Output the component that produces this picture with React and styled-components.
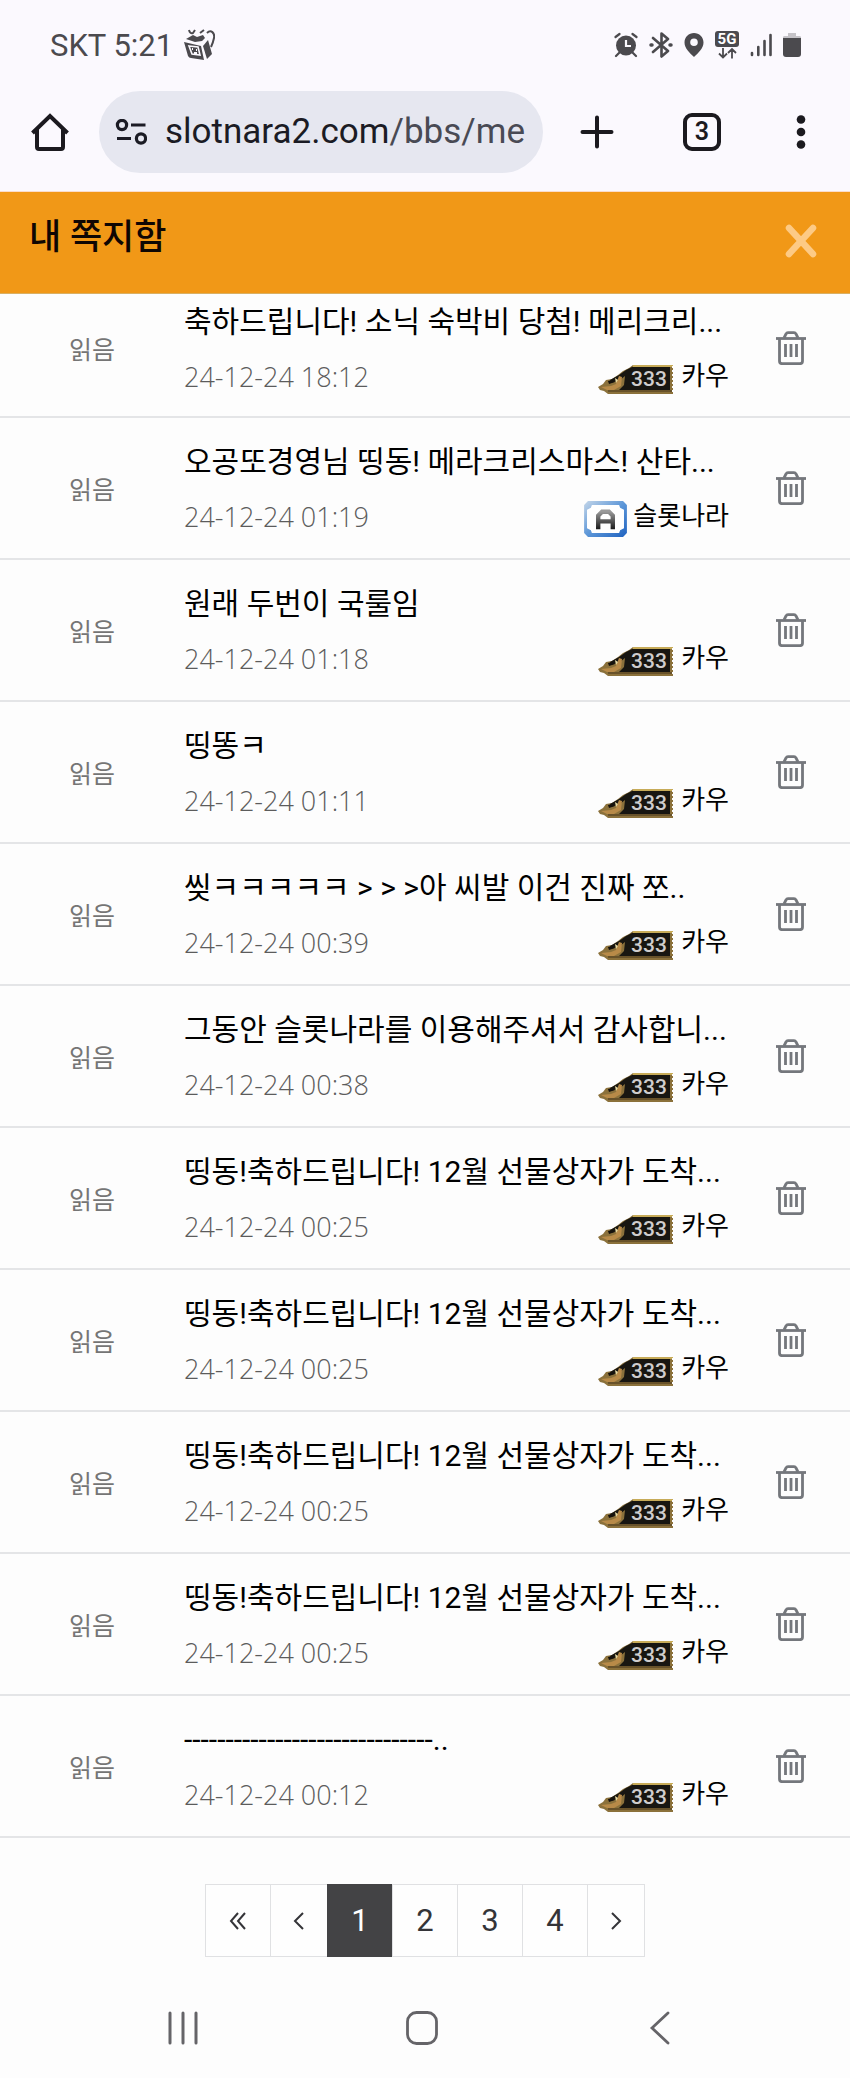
import React, { useState } from 'react';
import styled, { createGlobalStyle } from 'styled-components'

const messages = [
    { id: 1, title: '축하드립니다! 소닉 숙박비 당첨! 메리크리...', date: '24-12-24 18:12', name: '카우' },
    { id: 2, title: '오공또경영님 띵동! 메라크리스마스! 산타...', date: '24-12-24 01:19', name: '슬롯나라', admin: true },
    { id: 3, title: '원래 두번이 국룰임', date: '24-12-24 01:18', name: '카우' },
    { id: 4, title: '띵똥ㅋ', date: '24-12-24 01:11', name: '카우' },
    { id: 5, title: '씾ㅋㅋㅋㅋㅋ > > >아 씨발 이건 진짜 쪼..', date: '24-12-24 00:39', name: '카우' },
    { id: 6, title: '그동안 슬롯나라를 이용해주셔서 감사합니...', date: '24-12-24 00:38', name: '카우' },
    { id: 7, title: '띵동!축하드립니다! 12월 선물상자가 도착...', date: '24-12-24 00:25', name: '카우' },
    { id: 8, title: '띵동!축하드립니다! 12월 선물상자가 도착...', date: '24-12-24 00:25', name: '카우' },
    { id: 9, title: '띵동!축하드립니다! 12월 선물상자가 도착...', date: '24-12-24 00:25', name: '카우' },
    { id: 10, title: '띵동!축하드립니다! 12월 선물상자가 도착...', date: '24-12-24 00:25', name: '카우' },
    { id: 11, title: '------------------------------..', date: '24-12-24 00:12', name: '카우' },
]

const GiftIcon = () => (
    <svg width="32" height="32" viewBox="0 0 32 32" fill="none" stroke="#4b4a4e" strokeWidth="2">
        <path d="M1 13l4 14q1 2 3 2l13 2-3-14z" fill="#4b4a4e" stroke="none" />
        <path d="M20 17l5-6 4 14-5 5z" fill="#4b4a4e" stroke="none" />
        <path d="M3 10l7-4 4 2 6-2 2 3-3 3-7 1z" fill="#4b4a4e" stroke="none" />
        <path d="M6 17l9 1 2 8-8-1z" stroke="#fbf9fe" strokeWidth="1.6" />
        <path d="M9 20h1M13 21h1M11 24h3" stroke="#fbf9fe" />
        <path d="M6 1q1 4 4 3l2-3M17 4l4-3M24 4c4-4 8 0 7 5s-2 7-3 9" />
    </svg>
)

const AlarmIcon = () => (
    <svg width="24" height="26" viewBox="0 0 24 26" fill="none" stroke="#4b4a4e" strokeWidth="2.2" strokeLinecap="round">
        <circle cx="12" cy="13.5" r="10" fill="#4b4a4e" stroke="none" />
        <path d="M1.5 5l4-3M22.5 5l-4-3M5 21l-3 3M19 21l3 3" />
        <path d="M12 8v6h5" stroke="#fbf9fe" strokeLinecap="butt" />
    </svg>
)

const BluetoothIcon = () => (
    <svg width="24" height="26" viewBox="0 0 24 26" fill="none" stroke="#4b4a4e" strokeWidth="2.6" strokeLinejoin="round" strokeLinecap="round">
        <path d="M4 6l15 13-6.5 5.5v-23L19 7 4 20" />
        <path d="M2 13h1M21 13h1" strokeWidth="3.5" />
    </svg>
)

const PinIcon = () => (
    <svg width="20" height="26" viewBox="0 0 20 26">
        <path fillRule="evenodd" fill="#4b4a4e" d="M10 1C4.8 1 .5 5 .5 10.5.5 16.5 6 21 10 25c4-4 9.500-8.500 9.500-14.500C19.500 5 15.200 1 10 1zm0 5.500a3.800 3.800 0 1 1 0 7.600 3.800 3.800 0 0 1 0-7.600z" />
    </svg>
)

const SignalIcon = () => (
    <svg width="22" height="24" viewBox="0 0 22 24" stroke="#4b4a4e" strokeWidth="2.6" strokeLinecap="round">
        <path d="M2 20v2M8.300 14v8M14.500 8v14M20.500 2v20" />
    </svg>
)

const BatteryIcon = () => (
    <svg width="18" height="24" viewBox="0 0 18 24">
        <path d="M5 0h8v3h3a2 2 0 0 1 2 3H0a2 2 0 0 1 2-3h3z" fill="#c5c3c8" />
        <path d="M0 5h18v16a3 3 0 0 1-3 3H3a3 3 0 0 1-3-3z" fill="#4b4a4e" />
    </svg>
)

const NetworkIcon = () => (
    <svg width="24" height="28" viewBox="0 0 24 28" fill="none" stroke="#4b4a4e" strokeWidth="1.8">
        <rect width="24" height="16" rx="3" fill="#4b4a4e" stroke="none" />
        <text x="12" y="13" textAnchor="middle" fontSize="15" fontWeight="700" fontFamily="Roboto, sans-serif" fill="#fff" stroke="none">5G</text>
        <path d="M8 17v9M4 22.500l4 4 4-4M17 27.500v-9M13 22l4-4 4 4" />
    </svg>
)

const HomeIcon = () => (
    <svg width="38" height="38" viewBox="0 0 38 38" fill="none" stroke="#1b1a1f" strokeWidth="4" strokeLinejoin="round">
        <path d="M1.500 20L19 3l17.500 17" strokeLinejoin="miter" />
        <path d="M6 16v18q0 2 2 2h22q2 0 2-2V16" />
    </svg>
)

const TuneIcon = () => (
    <svg width="32" height="26" viewBox="0 0 32 26" fill="none" stroke="#1b1b24" strokeWidth="3.2">
        <circle cx="7" cy="6" r="4.6" />
        <path d="M16 6h14.500M2 19.500h14" />
        <circle cx="26" cy="19.5" r="4.6" />
    </svg>
)

const PlusIcon = () => (
    <svg width="34" height="34" viewBox="0 0 34 34" stroke="#1b1a1f" strokeWidth="4" strokeLinecap="round">
        <path d="M17 2.500v29M2.500 17h29" />
    </svg>
)

const DotsIcon = () => (
    <svg width="22" height="34" viewBox="0 0 22 34" fill="#1b1a1f">
        <circle cx="11" cy="4.5" r="4.3" />
        <circle cx="11" cy="17" r="4.3" />
        <circle cx="11" cy="29.5" r="4.3" />
    </svg>
)

const CloseIcon = () => (
    <svg width="34" height="34" viewBox="0 0 34 34" stroke="#fdca85" strokeWidth="6.5" strokeLinecap="round">
        <path d="M5 4l24 26M29 4L5 30" />
    </svg>
)

const TrashIcon = () => (
    <svg width="30" height="34" viewBox="0 0 30 34" fill="none" stroke="#74777c" strokeWidth="2.8">
        <path d="M0 7.500h30" />
        <path d="M8 7l2-4q.6-1.300 2-1.300h6q1.400 0 2 1.300l2 4" />
        <path d="M3.500 8v22q0 2.700 2.700 2.700h17.600q2.700 0 2.700-2.700V8" />
        <path d="M9.500 13v13M15 13v13M20.500 13v13" />
    </svg>
)

// level tag: gold nib on a black plate
const LevelIcon = () => (
    <svg width="77" height="29" viewBox="0 0 77 29">
        <path d="M0 22l5-3 3-4 6-1 6-4 5-4 6-3 4-3h40v29H10l-4-3-4-1z" fill="#8b713b" />
        <path d="M12 15l9-5 7-5 6-3h38v23H21l5-5 1-9-5 4-9 3z" fill="#181611" />
        <path d="M35 1h40" stroke="#c7ab58" strokeWidth="2" />
        <path d="M10 26h64" stroke="#5d4826" strokeWidth="1.5" />
        <path d="M3 22l10-1 5-2 3-8 3 1-1 9-7 4H9z" fill="#b88a48" />
        <path d="M10 16l5-1 2 2-6 2z" fill="#15110c" />
        <path d="M17 13l3 2-2 3z" fill="#e9dba2" />
        <path d="M75.500 1v28" stroke="#fdfdfd" strokeWidth="3" strokeDasharray="2 2" />
        <text x="51" y="21" textAnchor="middle" fontSize="21" fontWeight="500" fontFamily="Roboto, sans-serif" fill="#cfcdcd">333</text>
    </svg>
)

const AdminIcon = () => (
    <svg width="43" height="36" viewBox="0 0 44 37">
        <defs>
            <linearGradient id="frame" x1="0" y1="0" x2="1" y2="1">
                <stop offset="0" stopColor="#c4d6e9" />
                <stop offset="0.5" stopColor="#5d97d8" />
                <stop offset="1" stopColor="#1f62c0" />
            </linearGradient>
            <linearGradient id="letter" x1="0" y1="0" x2="0" y2="1">
                <stop offset="0" stopColor="#999" />
                <stop offset="1" stopColor="#1a1a1a" />
            </linearGradient>
        </defs>
        <path d="M4 0h36l4 4v29l-4 4H4l-4-4V4z" fill="url(#frame)" />
        <path d="M8 4h28l1 3 4 2v19l-4 2-1 3H8l-1-3-4-2V9l4-2z" fill="#fff" />
        <path d="M14.500 29V15l4-4h7l4 4v14M15 21h14" fill="none" stroke="url(#letter)" strokeWidth="4.5" />
    </svg>
)

const App = () => {
    const [page, setPage] = useState('1')
    const [list, setList] = useState(messages)

    const handleDelete = (id) => {
        setList(list.filter((item) => item.id !== id))
    }

    return (
        <>
            <GlobalStyle />
            <StatusBar>
                <Carrier>SKT 5:21 <GiftIcon /></Carrier>
                <StatusIcons>
                    <AlarmIcon />
                    <BluetoothIcon />
                    <PinIcon />
                    <NetworkIcon />
                    <SignalIcon />
                    <BatteryIcon />
                </StatusIcons>
            </StatusBar>
            <Toolbar>
                <IconButton aria-label="홈"><HomeIcon /></IconButton>
                <AddressBar>
                    <TuneIcon />
                    <Url>slotnara2.com<span>/bbs/me</span></Url>
                </AddressBar>
                <Tools>
                    <IconButton aria-label="새 탭"><PlusIcon /></IconButton>
                    <TabCount>3</TabCount>
                    <IconButton aria-label="메뉴"><DotsIcon /></IconButton>
                </Tools>
            </Toolbar>
            <Header>
                <Heading>내 쪽지함</Heading>
                <IconButton aria-label="닫기"><CloseIcon /></IconButton>
            </Header>
            <List>
                {list.map((item) => (
                    <Row key={item.id}>
                        <State>읽음</State>
                        <Message>
                            <Title href="#">{item.title}</Title>
                            <Info>
                                <DateText>{item.date}</DateText>
                                <Sender>
                                    {item.admin ? <AdminIcon /> : <LevelIcon />}
                                    <span>{item.name}</span>
                                </Sender>
                            </Info>
                        </Message>
                        <IconButton aria-label="삭제" onClick={() => handleDelete(item.id)}><TrashIcon /></IconButton>
                    </Row>
                ))}
            </List>
            <Pagination>
                <PageButton aria-label="처음" $wide>
                    <Arrow viewBox="0 0 18 18"><path d="M9 1L2 9l7 8M16 1L9 9l7 8" /></Arrow>
                </PageButton>
                <PageButton aria-label="이전">
                    <Arrow viewBox="0 0 18 18"><path d="M13 1L5 9l8 8" /></Arrow>
                </PageButton>
                {['1', '2', '3', '4'].map((n) => (
                    <PageButton key={n} $wide $active={page === n} onClick={() => setPage(n)}>{n}</PageButton>
                ))}
                <PageButton aria-label="다음">
                    <Arrow viewBox="0 0 18 18"><path d="M5 1l8 8-8 8" /></Arrow>
                </PageButton>
            </Pagination>
            <SystemNav>
                <IconButton aria-label="최근 앱">
                    <svg width="32" height="34" viewBox="0 0 32 34" stroke="#656468" strokeWidth="3" strokeLinecap="round">
                        <path d="M3 2v30M16 2v30M29 2v30" />
                    </svg>
                </IconButton>
                <IconButton aria-label="홈 화면">
                    <svg width="32" height="34" viewBox="0 0 32 34" fill="none" stroke="#656468" strokeWidth="2.8">
                        <rect x="1.5" y="1.5" width="29" height="31" rx="9" />
                    </svg>
                </IconButton>
                <IconButton aria-label="뒤로">
                    <svg width="32" height="34" viewBox="0 0 32 34" fill="none" stroke="#656468" strokeWidth="2.8" strokeLinecap="round">
                        <path d="M24 2L8 17l16 15" />
                    </svg>
                </IconButton>
            </SystemNav>
        </>
    );
};

export default App;


const GlobalStyle = createGlobalStyle`
    * {
        box-sizing: border-box;
    }
    body {
        margin: 0;
        background: #fdfdfd;
        color: #0b0b0b;
        font-family: Roboto, 'Noto Sans CJK KR', sans-serif;
    }
    svg {
        display: block;
        flex-shrink: 0;
    }
`
const StatusBar = styled.div`
    height: 90px;
    padding: 0 49px 0 50px;
    display: flex;
    align-items: center;
    justify-content: space-between;
    background: #fbf9fe;
`
const Carrier = styled.div`
    display: flex;
    align-items: center;
    gap: 10px;
    font-size: 31px;
    color: #4b4a4e;
`
const StatusIcons = styled.div`
    display: flex;
    align-items: center;
    gap: 11px;
`
const Toolbar = styled.div`
    height: 102px;
    padding: 0 38px 18px 31px;
    display: flex;
    align-items: center;
    background: #fbf9fe;
    border-bottom: 1px solid #fbdccb;
`
const IconButton = styled.button`
    display: flex;
    align-items: center;
    justify-content: center;
    padding: 0;
    border: none;
    background: none;
    cursor: pointer;
`
const AddressBar = styled.div`
    flex: 1;
    min-width: 0;
    height: 82px;
    margin: 0 37px 0 30px;
    padding: 0 14px 0 16px;
    display: flex;
    align-items: center;
    gap: 18px;
    border-radius: 41px;
    background: #e6e7f0;
`
const Url = styled.div`
    flex: 1;
    overflow: hidden;
    white-space: nowrap;
    font-size: 35px;
    color: #1b1b24;

    span {
        color: #494a54;
    }
`
const Tools = styled.div`
    display: flex;
    align-items: center;
    gap: 69px;
`
const TabCount = styled.button`
    width: 38px;
    height: 38px;
    padding: 0;
    border: 4px solid #1b1a1f;
    border-radius: 9px;
    background: none;
    font-family: inherit;
    font-size: 25px;
    font-weight: 600;
    line-height: 30px;
    color: #1b1a1f;
`
const Header = styled.header`
    height: 102px;
    padding: 0 32px 4px 29px;
    display: flex;
    align-items: center;
    justify-content: space-between;
    background: #f19817;
    border-bottom: 1px solid #d9b063;
`
const Heading = styled.h1`
    margin: 0;
    padding-bottom: 6px;
    font-size: 35px;
    font-weight: 500;
    line-height: 40px;
    color: #0f0603;
`
const List = styled.ul`
    margin: 0;
    padding: 0;
    list-style: none;
`
const Row = styled.li`
    height: 142px;
    padding-right: 44px;
    display: grid;
    grid-template-columns: 184px 1fr 30px;
    align-items: center;
    border-bottom: 2px solid #e4e5e7;

    &:first-child {
        height: 124px;
        padding-bottom: 16px;
    }
`
const State = styled.span`
    text-align: center;
    font-size: 25px;
    color: #757575;
`
const Message = styled.div`
    min-width: 0;
    padding-right: 47px;
`
const Title = styled.a`
    display: block;
    overflow: hidden;
    white-space: nowrap;
    font-size: 30px;
    line-height: 56px;
    color: #000;
    text-decoration: none;
`
const Info = styled.div`
    height: 52px;
    display: flex;
    align-items: center;
    justify-content: space-between;
`
const DateText = styled.time`
    font-family: 'Open Sans', sans-serif;
    font-size: 27px;
    font-weight: 300;
    color: #5c5c5c;
`
const Sender = styled.div`
    display: flex;
    align-items: center;
    gap: 6px;
    font-size: 26px;
    line-height: 36px;
    color: #000;

    svg {
        margin-top: 6px;
    }
`
const Pagination = styled.nav`
    padding: 46px 0 54px;
    display: flex;
    justify-content: center;
`
const PageButton = styled.button`
    width: ${({ $wide }) => ($wide ? '66px' : '58px')};
    height: 73px;
    padding: 0;
    display: flex;
    align-items: center;
    justify-content: center;
    margin-left: -1px;
    border: 1px solid ${({ $active }) => ($active ? '#434345' : '#e0e1e3')};
    background: ${({ $active }) => ($active ? '#434345' : '#fefefe')};
    color: ${({ $active }) => ($active ? '#fff' : '#343438')};
    font-family: inherit;
    font-size: 31px;
    cursor: pointer;

    &:first-child {
        margin-left: 0;
    }
`
const Arrow = styled.svg`
    width: 18px;
    height: 18px;
    fill: none;
    stroke: #343438;
    stroke-width: 2;
`
const SystemNav = styled.nav`
    padding: 0 174px 33px 167px;
    display: flex;
    justify-content: space-between;
`
